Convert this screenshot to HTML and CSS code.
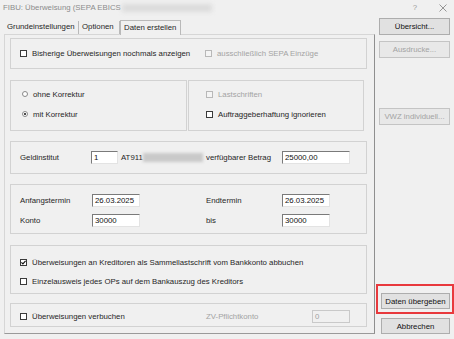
FILE: index.html
```html
<!DOCTYPE html>
<html lang="de">
<head>
<meta charset="UTF-8">
<title>FIBU: Überweisung (SEPA EBICS)</title>
<link rel="stylesheet" href="styles.css">
</head>
<body>
  <div class="window">
    <div class="titlebar">
      <span class="title">FIBU: Überweisung (SEPA EBICS</span>
      <span class="title-blur"></span>
      <span class="help">?</span>
      <svg class="close" width="8" height="8" viewBox="0 0 8 8"><path d="M0.5 0.5L7.5 7.5M7.5 0.5L0.5 7.5" stroke="#8a8a8a" stroke-width="0.9"/></svg>
    </div>

    <div class="main">
      <div class="dialog">
        <div class="tabs">
          <span class="tab tab-1">Grundeinstellungen</span>
          <span class="tab tab-2">Optionen</span>
          <span class="tab tab-3 active">Daten erstellen</span>
        </div>

        <div class="panel">
          <!-- Anzeige -->
          <div class="group g1">
            <div class="col-a"><span class="check"></span>Bisherige Überweisungen nochmals anzeigen</div>
            <div class="disabled"><span class="check off"></span>ausschließlich SEPA Einzüge</div>
          </div>

          <!-- Korrektur -->
          <div class="group-row">
            <div class="group sub-left">
              <div class="line"><span class="radio"></span>ohne Korrektur</div>
              <div class="line"><span class="radio on"></span>mit Korrektur</div>
            </div>
            <div class="group sub-right">
              <div class="line disabled"><span class="check off"></span>Lastschriften</div>
              <div class="line"><span class="check"></span>Auftraggeberhaftung ignorieren</div>
            </div>
          </div>

          <!-- Bank -->
          <div class="group g3">
            <span class="lbl w71">Geldinstitut</span>
            <span class="seg w115"><span class="field w27">1</span><span class="iban">AT911</span><span class="iban-blur"></span></span>
            <span class="lbl w76">verfügbarer Betrag</span>
            <span class="field w68">25000,00</span>
          </div>

          <!-- Zeitraum -->
          <div class="group g4">
            <div class="line">
              <span class="lbl w72">Anfangstermin</span>
              <span class="seg w114"><span class="field w48">26.03.2025</span></span>
              <span class="lbl w76">Endtermin</span>
              <span class="field w48">26.03.2025</span>
            </div>
            <div class="line">
              <span class="lbl w72">Konto</span>
              <span class="seg w114"><span class="field w48">30000</span></span>
              <span class="lbl w76">bis</span>
              <span class="field w48">30000</span>
            </div>
          </div>

          <!-- Sammellastschrift -->
          <div class="group g5">
            <div class="line"><span class="check">
              <svg width="5" height="5" viewBox="0 0 5 5"><path d="M0.4 2.4L1.9 3.9L4.6 0.9" fill="none" stroke="#111" stroke-width="1.2"/></svg>
            </span>Überweisungen an Kreditoren als Sammellastschrift vom Bankkonto abbuchen</div>
            <div class="line"><span class="check"></span>Einzelausweis jedes OPs auf dem Bankauszug des Kreditors</div>
          </div>

          <!-- Verbuchen -->
          <div class="group g6">
            <span class="seg w186"><span class="check"></span>Überweisungen verbuchen</span>
            <span class="lbl w106 disabled">ZV-Pflichtkonto</span>
            <span class="field w38 field-off">0</span>
          </div>
        </div>
      </div>

      <div class="side">
        <button class="btn btn-first">Übersicht...</button>
        <button class="btn btn-off">Ausdrucke...</button>
        <button class="btn btn-off btn-vwz">VWZ individuell...</button>
        <div class="mark">
          <button class="btn">Daten übergeben</button>
        </div>
        <button class="btn btn-cancel">Abbrechen</button>
      </div>
    </div>
  </div>
</body>
</html>
```

FILE: styles.css
```css
body {
  margin: 0;
  background-color: #f0f0f0;
  font-family: "Liberation Sans", Arial, sans-serif;
  font-size: 7.8px;
  color: #262626;
}

.window {
  width: 454px;
  height: 339px;
  overflow: hidden;
}

/* title bar */
.titlebar {
  height: 15px;
  padding-bottom: 1px;
  display: flex;
  align-items: center;
  padding-left: 3px;
  color: #8c8c8c;
}

.title-blur {
  width: 90px;
  height: 8px;
  margin-left: 1px;
  background-color: #dcdcdc;
  filter: blur(2px);
}

.help {
  margin-left: auto;
  color: #9a9a9a;
}

.close {
  margin: 0 7px 0 22px;
}

.main {
  display: flex;
  align-items: flex-start;
}

/* tabs */
.dialog {
  margin-left: 4px;
  width: 371px;
}

.tabs {
  height: 18px;
  display: flex;
  align-items: flex-end;
}

.tab {
  box-sizing: border-box;
  height: 13px;
  padding-left: 3px;
  line-height: 12px;
  border-right: 1px solid #b9b9b9;
  white-space: nowrap;
}

.tab-1 { width: 75px; }
.tab-2 { width: 41px; }

.tab-3 {
  width: 61px;
  height: 15px;
  margin-bottom: -1px;
  position: relative;
  line-height: 13px;
  border: 1px solid #b9b9b9;
  border-bottom: none;
  background-color: #f0f0f0;
}

.panel {
  box-sizing: border-box;
  height: 300px;
  padding: 3px 7px 0 5px;
  border: 1px solid #d6d6d6;
  border-right-color: #8f8f8f;
  border-bottom-color: #9a9a9a;
}

/* group boxes */
.group {
  box-sizing: border-box;
  border: 1px solid #d2d2d2;
  padding-left: 9px;
}

.g1 {
  height: 31px;
  display: flex;
  align-items: center;
  padding-bottom: 1px;
}

.col-a {
  width: 185px;
  display: flex;
  align-items: center;
}

.group-row {
  display: flex;
  gap: 1px;
  margin-top: 11px;
}

.sub-left,
.sub-right {
  height: 51px;
  padding-top: 6px;
  display: flex;
  flex-direction: column;
  gap: 6px;
}

.sub-left {
  width: 177px;
  padding-left: 11px;
}

.sub-right {
  width: 176px;
  padding-left: 17px;
}

.line {
  height: 14px;
  display: flex;
  align-items: center;
  white-space: nowrap;
}

.g3 {
  height: 33px;
  margin-top: 10px;
  display: flex;
  align-items: center;
}

.g4 {
  height: 50px;
  margin-top: 10px;
  padding-top: 8px;
  display: flex;
  flex-direction: column;
  gap: 6px;
}

.g5 {
  height: 49px;
  margin-top: 11px;
  padding-top: 9px;
  display: flex;
  flex-direction: column;
  gap: 5px;
}

.g6 {
  height: 24px;
  margin-top: 9px;
  padding-top: 3px;
  display: flex;
  align-items: center;
}

/* columns */
.lbl, .seg {
  display: flex;
  align-items: center;
  white-space: nowrap;
}

.w71 { width: 71px; }
.w72 { width: 72px; }
.w76 { width: 76px; }
.w106 { width: 106px; }
.w114 { width: 114px; }
.w115 { width: 115px; }
.w186 { width: 186px; }

/* controls */
.check {
  box-sizing: border-box;
  width: 7px;
  height: 7px;
  margin-right: 5px;
  flex: none;
  border: 1px solid #3a3a3a;
  background-color: #fff;
  display: flex;
  align-items: center;
  justify-content: center;
}

.check.off {
  border-color: #b8b8b8;
  background-color: #f4f4f4;
}

.radio {
  box-sizing: border-box;
  width: 6px;
  height: 6px;
  margin-right: 5px;
  border: 1px solid #8a8a8a;
  border-radius: 50%;
  background-color: #fff;
  display: flex;
  align-items: center;
  justify-content: center;
}

.radio.on::after {
  content: "";
  width: 2px;
  height: 2px;
  border-radius: 50%;
  background-color: #111;
}

.disabled {
  color: #a3a3a3;
  display: flex;
  align-items: center;
}

.field {
  box-sizing: border-box;
  height: 13px;
  padding-left: 2px;
  line-height: 11px;
  background-color: #fff;
  border: 1px solid #e3e3e3;
  border-top-color: #7a7a7a;
  border-left-color: #7a7a7a;
  color: #111;
}

.w27 { width: 27px; }
.w38 { width: 38px; }
.w48 { width: 48px; }
.w68 { width: 68px; }

.field-off {
  background-color: #f0f0f0;
  color: #a0a0a0;
  border-color: #c9c9c9;
}

.iban {
  margin-left: 3px;
}

.iban-blur {
  width: 60px;
  height: 9px;
  background-color: #c9c9c9;
  filter: blur(1.5px);
}

/* right column buttons */
.side {
  margin-left: 4px;
  width: 71px;
  display: flex;
  flex-direction: column;
}

.btn {
  box-sizing: border-box;
  width: 71px;
  height: 17px;
  padding: 0;
  font-family: inherit;
  font-size: 7.8px;
  color: #111;
  background-color: #e1e1e1;
  border: 1px solid #adadad;
}

.btn-first { margin-top: 2px; }

.btn-off {
  margin-top: 6px;
  color: #a3a3a3;
  background-color: #e8e8e8;
  border-color: #c4c4c4;
}

.btn-vwz { margin-top: 50px; }

.mark {
  width: 78px;
  height: 30px;
  box-sizing: border-box;
  margin: 159px 0 0 -3px;
  padding: 7px 0 0 3px;
  border: 2px solid #e8393d;
}

.mark .btn {
  width: 69px;
  height: 16px;
}

.btn-cancel {
  width: 69px;
  height: 16px;
  margin: 4px 0 0 2px;
}
```
